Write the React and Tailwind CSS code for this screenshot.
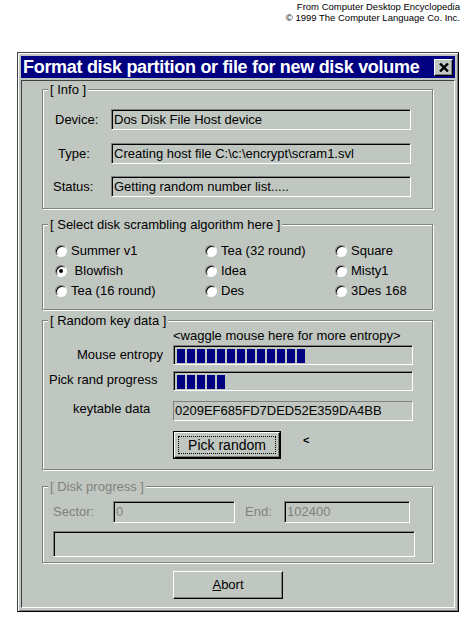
import React from "react";

const face = "bg-[#c0c7c0]";
const sunken =
    "border border-t-[#808080] border-l-[#808080] border-b-white border-r-white shadow-[inset_1px_1px_0_#000]";
const raised =
    "border border-t-white border-l-white border-b-black border-r-black shadow-[inset_-1px_-1px_0_#808080]";

const algorithms = [
    ["Summer v1", "Tea (32 round)", "Square"],
    [" Blowfish", "Idea", "Misty1"],
    ["Tea (16 round)", "Des", "3Des 168"],
];

const Group = ({ label, className, disabled, children }) => (
    <div
        className={`ml-[20px] mr-[21px] border border-[#808080] shadow-[inset_1px_1px_0_#fff,1px_1px_0_#fff] ${className}`}
    >
        <div
            className={`-mt-[8px] ml-[5px] w-fit h-[15px] leading-[15px] px-[2px] ${face} ${
                disabled ? "text-[#808080]" : "text-black"
            }`}
        >
            {label}
        </div>
        {children}
    </div>
);

const Radio = ({ checked }) => (
    <span className="w-[12px] h-[12px] rounded-full bg-white border border-t-[#808080] border-l-[#808080] border-b-white border-r-white shadow-[inset_1px_1px_0_#000] flex items-center justify-center shrink-0">
        {checked && <span className="w-[4px] h-[4px] rounded-full bg-black" />}
    </span>
);

const Bar = ({ blocks }) => (
    <div className={`w-[240px] h-[20px] ${sunken} flex items-center gap-[2px] pl-[3px] pt-[1px]`}>
        {Array.from({ length: blocks }).map((_, i) => (
            <div key={i} className="w-[8px] h-[14px] bg-[#000080]" />
        ))}
    </div>
);

const App = () => {
    return (
        <div className="w-[468px] h-[620px] bg-white overflow-hidden font-['Liberation_Sans',Arial,sans-serif] text-[13px] text-black">
            {/* Credits */}
            <div className="h-[52px] flex flex-col items-end pt-[1px] pr-[8px] text-[9.5px] leading-[11px]">
                <div>From Computer Desktop Encyclopedia</div>
                <div>© 1999 The Computer Language Co. Inc.</div>
            </div>

            {/* Window */}
            <div
                className={`ml-[17px] w-[442px] h-[560px] ${face} border border-t-[#404040] border-l-[#404040] border-b-black border-r-black shadow-[inset_1px_1px_0_#fff,inset_-1px_-1px_0_#808080] p-[3px]`}
            >
                <div className="h-[22px] bg-[#000080] flex items-center pl-[2px] pr-[2px] overflow-hidden">
                    <span className="text-white font-bold text-[18px] tracking-[-0.3px] leading-[22px] whitespace-nowrap">
                        Format disk partition or file for new disk volume
                    </span>
                    <div className={`ml-auto shrink-0 w-[19px] h-[17px] ${face} ${raised} flex items-center justify-center`}>
                        <svg width="10" height="9" viewBox="0 0 10 9">
                            <path d="M1 0.5 L9 8.5 M9 0.5 L1 8.5" stroke="#000" strokeWidth="2.4" />
                        </svg>
                    </div>
                </div>

                {/* Client area */}
                <div className="mt-[2px] h-[528px] border border-t-[#404040] border-l-[#404040] border-b-white border-r-white">
                    {/* Info */}
                    <Group label="[ Info ]" className="mt-[8px] h-[120px]">
                        <div className="flex flex-col">
                            {[
                                ["Device:", "pl-[12px]", "mt-[12px]", "Dos Disk File Host device"],
                                ["Type:", "pl-[15px]", "mt-[13px]", "Creating host file C:\\c:\\encrypt\\scram1.svl"],
                                ["Status:", "pl-[10px]", "mt-[12px]", "Getting random number list....."],
                            ].map(([label, pl, mt, value]) => (
                                <div key={label} className={`flex items-center h-[21px] ${mt}`}>
                                    <span className={`w-[68px] ${pl}`}>{label}</span>
                                    <div className={`w-[300px] h-[21px] ${sunken} pl-[2px] leading-[19px] whitespace-nowrap`}>
                                        {value}
                                    </div>
                                </div>
                            ))}
                        </div>
                    </Group>

                    {/* Algorithms */}
                    <Group label="[ Select disk scrambling algorithm here ]" className="mt-[15px] h-[86px]">
                        <div className="mt-[9px] pl-[12px]">
                            {algorithms.map((row, r) => (
                                <div key={r} className="grid grid-cols-[150px_130px_1fr] h-[20px]">
                                    {row.map((name, c) => (
                                        <div key={name} className="flex items-center gap-[4px]">
                                            <Radio checked={r === 1 && c === 0} />
                                            <span className="whitespace-pre">{name}</span>
                                        </div>
                                    ))}
                                </div>
                            ))}
                        </div>
                    </Group>

                    {/* Random key data */}
                    <Group label="[ Random key data ]" className="mt-[10px] h-[150px]">
                        <div className="ml-[130px] h-[16px] leading-[16px] whitespace-nowrap">
                            &lt;waggle mouse here for more entropy&gt;
                        </div>
                        <div className="mt-[1px] flex items-center h-[20px]">
                            <span className="w-[130px] pl-[34px] whitespace-nowrap">Mouse entropy</span>
                            <Bar blocks={13} />
                        </div>
                        <div className="mt-[6px] flex items-center h-[20px]">
                            <span className="w-[130px] pl-[6px] -mt-[3px] whitespace-nowrap">Pick rand progress</span>
                            <Bar blocks={5} />
                        </div>
                        <div className="mt-[10px] flex items-center h-[20px]">
                            <span className="w-[130px] pl-[30px] -mt-[5px] whitespace-nowrap">keytable data</span>
                            <div className="w-[240px] h-[20px] border border-t-[#808080] border-l-[#808080] border-b-white border-r-white pl-[1px] leading-[18px]">
                                0209EF685FD7DED52E359DA4BB
                            </div>
                        </div>
                        <div className="mt-[10px] flex items-center">
                            <div className="ml-[130px] w-[108px] h-[28px] border border-black">
                                <div className={`h-full ${raised} p-[3px]`}>
                                    <div className="h-full border border-dotted border-black flex items-center justify-center text-[14px]">
                                        Pick random
                                    </div>
                                </div>
                            </div>
                            <span className="ml-[22px] -mt-[10px] font-bold text-[11px]">&lt;</span>
                        </div>
                    </Group>

                    {/* Disk progress */}
                    <Group label="[ Disk progress ]" className="mt-[16px] h-[77px]" disabled>
                        <div className="mt-[7px] flex items-center h-[22px] text-[#808080]">
                            <span className="w-[70px] pl-[10px]">Sector:</span>
                            <div className={`w-[122px] h-[22px] ${sunken} pl-[2px] leading-[20px]`}>0</div>
                            <span className="w-[49px] pl-[10px]">End:</span>
                            <div className={`w-[126px] h-[22px] ${sunken} pl-[2px] leading-[20px]`}>102400</div>
                        </div>
                        <div className={`mt-[8px] ml-[10px] w-[362px] h-[26px] ${sunken}`} />
                    </Group>

                    {/* Abort */}
                    <div
                        className={`mt-[8px] ml-[151px] w-[110px] h-[28px] ${raised} flex items-center justify-center`}
                    >
                        <span>
                            <span className="underline">A</span>bort
                        </span>
                    </div>
                </div>
            </div>
        </div>
    );
};

export default App;
